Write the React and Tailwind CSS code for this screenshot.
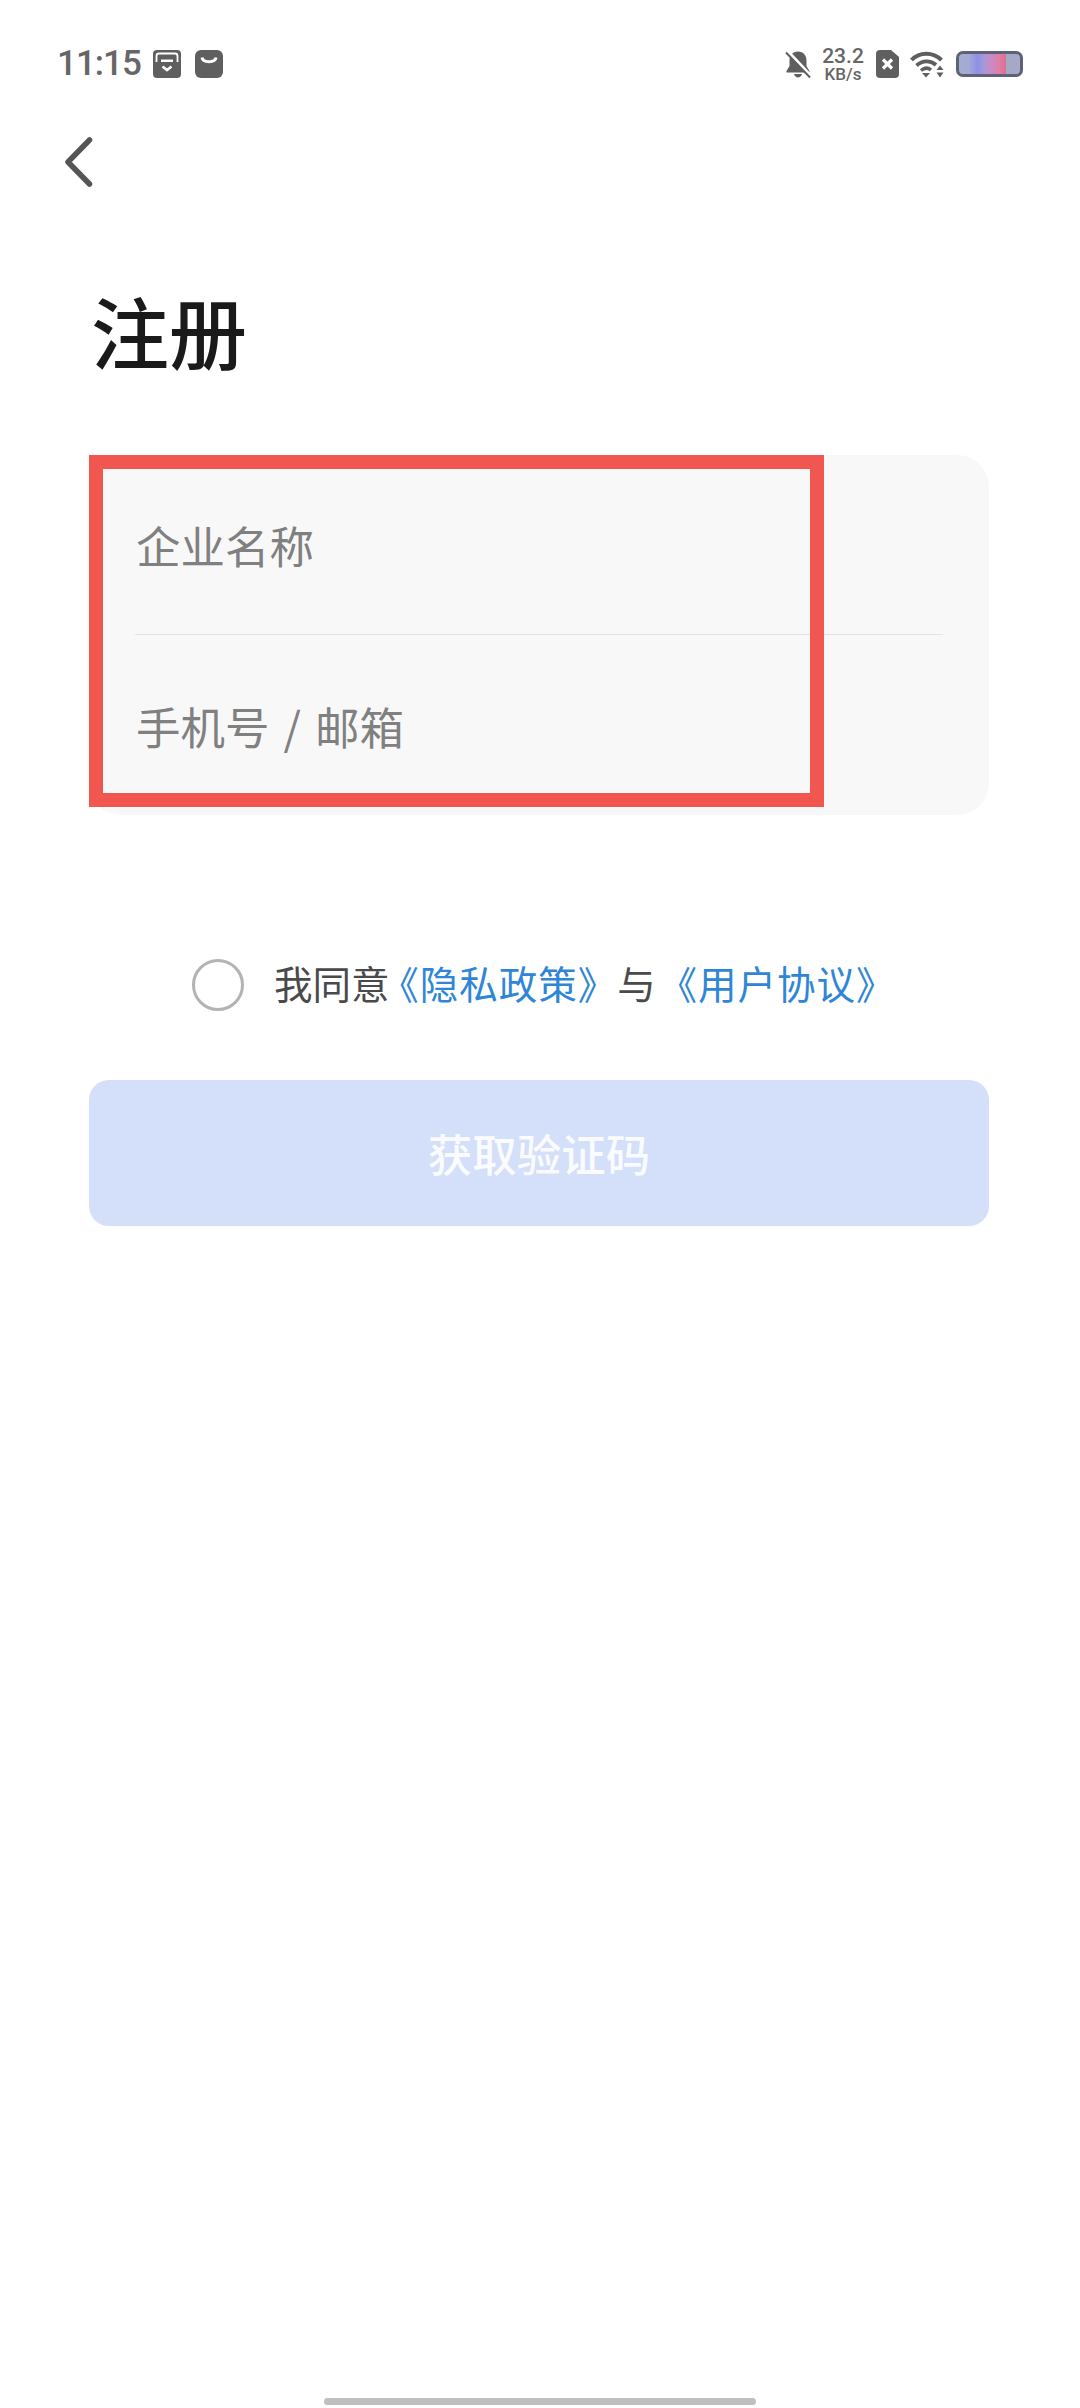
import React from "react";

const CJK = "font-['Noto_Sans_CJK_SC','Noto_Sans',sans-serif]";

function BoxIcon() {
  return (
    <svg width="28" height="28" viewBox="0 0 28 28">
      <rect width="28" height="28" rx="4" fill="#5f5f5f" />
      <path d="M3.5 12V6a2.5 2.5 0 0 1 2.5-2.5h16A2.5 2.5 0 0 1 24.500 6v6" fill="none" stroke="#fff" strokeWidth="1.800" />
      <path d="M8 12V9.500h12V12z" fill="#fff" />
      <path d="M9.500 16.500l4.500 3.500 4.500-3.500" fill="none" stroke="#fff" strokeWidth="2.600" />
    </svg>
  );
}

function BagIcon() {
  return (
    <svg width="28" height="28" viewBox="0 0 28 28">
      <rect width="28" height="28" rx="6" fill="#5f5f5f" />
      <path d="M7 7.500c.8 5.500 13.200 5.500 14 0" fill="none" stroke="#fff" strokeWidth="3" />
    </svg>
  );
}

function BellOff() {
  return (
    <svg width="26" height="27" viewBox="0 0 26 27">
      <path d="M13 .5c5.500 0 8.500 4 8.500 9v5.500l3 5v1.500H1.500V20l3-5V9.500c0-5 3-9 8.500-9z" fill="#5f5f5f" />
      <path d="M9 23h8c-.5 2.300-2.300 3.500-4 3.500S9.500 25.300 9 23z" fill="#5f5f5f" />
      <path d="M3 .5l22.500 24" stroke="#fff" strokeWidth="3.200" />
      <path d="M1 1.500l24 25" stroke="#5f5f5f" strokeWidth="2" />
    </svg>
  );
}

function SimIcon() {
  return (
    <svg width="23" height="28" viewBox="0 0 23 28">
      <path d="M4 0h11l8 7v17a4 4 0 0 1-4 4H4a4 4 0 0 1-4-4V4a4 4 0 0 1 4-4z" fill="#5f5f5f" />
      <path d="M7 9.500l9 9M16 9.500l-9 9" stroke="#fff" strokeWidth="3.200" />
    </svg>
  );
}

function WifiIcon() {
  return (
    <svg width="34" height="28" viewBox="0 0 34 28" fill="none">
      <path d="M1.500 10C9.500 1.500 23 1.500 31.500 10" stroke="#5f5f5f" strokeWidth="4" />
      <path d="M6.500 15.500c6-5.500 14-5.500 19.500-.5" stroke="#5f5f5f" strokeWidth="3.800" />
      <path d="M11 20.500c3.500-3 7-3 10-.5" stroke="#5f5f5f" strokeWidth="3.400" />
      <path d="M12 23h8l-4 4.500z" fill="#5f5f5f" />
      <path d="M30 15.500l3.500 4.500h-7zM30 27.500l3.500-5h-7z" fill="#5f5f5f" />
    </svg>
  );
}

function Battery() {
  return (
    <div className="w-[67px] h-[26px] rounded-[7px] border-[3px] border-[#5d6274] overflow-hidden bg-[linear-gradient(90deg,#a3aed0_0%,#a3aad6_16%,#8f8fe6_30%,#a898d8_42%,#c98ac4_52%,#de7ea8_66%,#d9728e_76%,#a3a9c6_78%,#a3a9c6_100%)]" />
  );
}

function Chevron() {
  return (
    <svg width="30" height="50" viewBox="0 0 30 50" fill="none">
      <path d="M25.500 3L4 25l21.500 22" stroke="#555" strokeWidth="5.500" strokeLinecap="round" strokeLinejoin="round" />
    </svg>
  );
}

export default function App() {
  return (
    <div className={`relative w-[1080px] h-[2408px] bg-white overflow-hidden flex flex-col ${CJK}`}>
      {/* status bar */}
      <div className="h-[137px] pl-[57px] pr-[57px] pt-[50px] flex items-start justify-between shrink-0">
        <div className="flex items-center h-[28px]">
          <span className="font-['Roboto',sans-serif] font-medium text-[35px] leading-[28px] tracking-[-1px] text-[#666666] w-[96px]">11:15</span>
          <BoxIcon />
          <span className="w-[14px]" />
          <BagIcon />
        </div>
        <div className="flex items-center h-[28px]">
          <BellOff />
          <div className="w-[42px] ml-[11px] flex flex-col items-center font-['Roboto',sans-serif] font-medium text-[#666666]">
            <span className="text-[21px] leading-[20px]">23.2</span>
            <span className="text-[17px] leading-[17px]">KB/s</span>
          </div>
          <span className="w-[12px]" />
          <SimIcon />
          <span className="w-[11px]" />
          <WifiIcon />
          <span className="w-[12px]" />
          <Battery />
        </div>
      </div>

      {/* back */}
      <div className="pl-[64px] h-[60px] shrink-0">
        <Chevron />
      </div>

      {/* title */}
      <h1 className="pl-[91px] mt-[83px] text-[78px] leading-[100px] font-medium text-[#1a1a1a] shrink-0">注册</h1>

      {/* fields card */}
      <div className="relative ml-[89px] mt-[75px] w-[900px] h-[360px] rounded-[32px] bg-[#f8f8f8] px-[46px] flex flex-col shrink-0">
        <div className="h-[180px] flex items-center pt-[1px] border-b-[1px] border-[#e3e3e3]">
          <span className="text-[44.500px] leading-[60px] text-[#808080] pl-[1px]">企业名称</span>
        </div>
        <div className="h-[180px] flex items-center pt-[1px]">
          <span className="text-[44.500px] leading-[60px] text-[#808080] pl-[1px] [word-spacing:4px]">手机号 / 邮箱</span>
        </div>
        <div className="absolute left-0 top-0 w-[735px] h-[352px] border-[14px] border-[#f25650]" />
      </div>

      {/* agreement */}
      <div className="ml-[192px] mt-[144px] h-[52px] flex items-center shrink-0">
        <span className="w-[52px] h-[52px] rounded-full border-[3px] border-[#b3b3b3]" />
        <span className="ml-[30px] -mt-[6px] text-[38.500px] leading-[52px] text-[#4a4a4a] whitespace-nowrap">
          我同意<span className="text-[#2f86d6] tracking-[1px]"><span className="[font-feature-settings:'halt'] ml-[10px]">《</span>隐私政策》</span>与<span className="text-[#2f86d6] tracking-[1px]"><span className="[font-feature-settings:'halt'] ml-[22px]">《</span>用户协议》</span>
        </span>
      </div>

      {/* button */}
      <div className="ml-[89px] mt-[69px] w-[900px] h-[146px] rounded-[20px] bg-[#d4dffa] flex items-center justify-center shrink-0">
        <span className="text-[44.500px] leading-[60px] font-medium text-white opacity-90">获取验证码</span>
      </div>

      {/* home indicator */}
      <div className="absolute left-[324px] bottom-[3px] w-[432px] h-[7px] rounded-full bg-[#bfbfbf]" />
    </div>
  );
}
